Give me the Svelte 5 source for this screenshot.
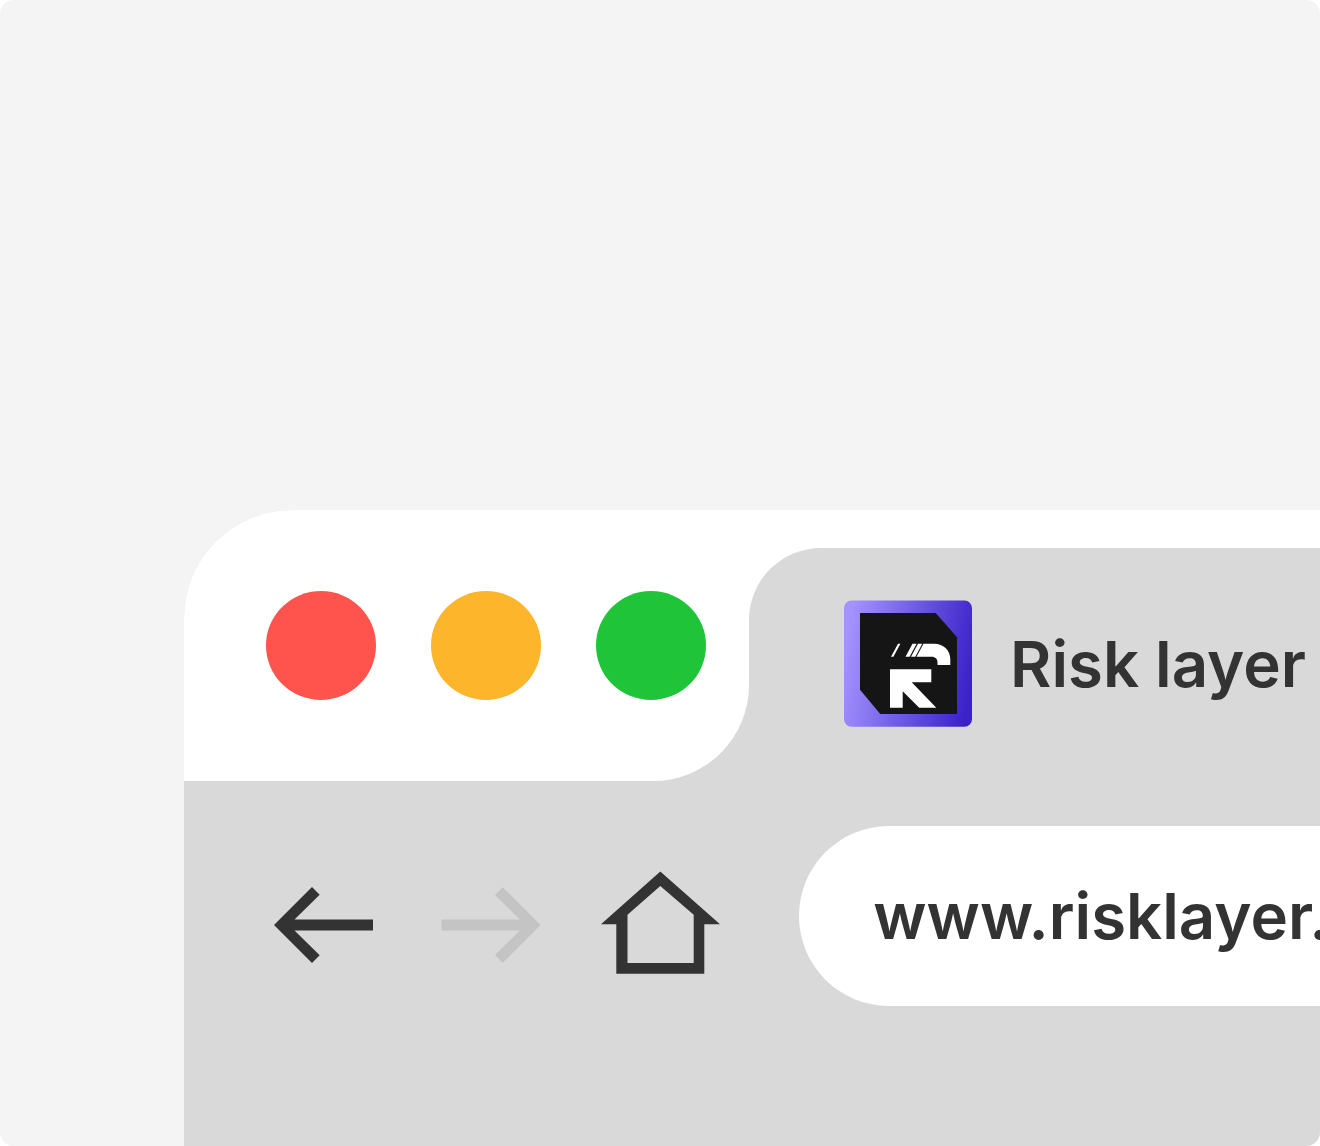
<script lang="ts">
	let { title = 'Risk layer', url = 'www.risklayer.com' } = $props();

	const lights = ['close', 'minimize', 'zoom'];
</script>

<div class="canvas">
	<div class="window">
		<div class="titlebar">
			<div class="controls">
				{#each lights as light}
					<span class="light {light}"></span>
				{/each}
			</div>
			<div class="tabs">
				<div class="tab">
					<svg class="favicon" viewBox="0 -0.5 128 127">
						<defs>
							<linearGradient id="violet" x1="0" y1="0.42" x2="1" y2="0.58">
								<stop offset="0" stop-color="#a493ff" />
								<stop offset="1" stop-color="#3a22c8" />
							</linearGradient>
						</defs>
						<rect width="128" height="126.3" rx="7.5" fill="url(#violet)" />
						<path d="M16 12.5H91.7L113 36.8V113.5H36.3L16 89.2Z" fill="#151515" />
						<g fill="#fff">
							<path d="M46 68.8H87.3V81.7H67.7L92.3 107.2H75.2L58.7 90.8V107.2H46Z" />
							<path d="M47 56.3L54 43.2H56.4L49.4 56.3Z" />
							<path d="M61.5 56.3L68.5 43.2H72.6L65.6 56.3Z" />
							<path d="M67 56.3L74 43.2H78.3L71.3 56.3Z" />
							<path d="M72.5 56.3L79.5 43.2H90C100 43.2 106.3 50 106.3 59V64.4H93.5V62C93.5 58.5 91.3 56.3 87.5 56.3Z" />
						</g>
					</svg>
					<span class="title">{title}</span>
				</div>
			</div>
		</div>

		<div class="toolbar">
			<div class="nav">
				<svg viewBox="0 0 122 104">
					<path d="M11 55L49 17L56.7 24.7L31.5 49.5H110V60.5H31.5L56.7 85.3L49 93Z" />
				</svg>
				<svg class="disabled" viewBox="0 0 122 104">
					<path d="M109.5 55L71.7 17.3L64 25L88.8 49.5H10.5V60.5H88.8L64 85L71.7 92.7Z" />
				</svg>
				<svg viewBox="0 0 122 104">
					<path
						fill-rule="evenodd"
						d="M61.3 1.5L121 54.3H105.3V103.7H17.3V54.3H2ZM61.3 16L28.5 44.7V93H94.7V44.7Z"
					/>
				</svg>
			</div>
			<div class="address">{url}</div>
		</div>
	</div>
</div>

<style>
	:global(body) {
		margin: 0;
		background: #fff;
	}

	.canvas {
		box-sizing: border-box;
		width: 1320px;
		height: 1146px;
		padding: 510px 0 0 184px;
		overflow: hidden;
		border-radius: 14px;
		background: #f4f4f4;
		color: #333;
		font-family: Inter, 'Liberation Sans', sans-serif;
		font-size: 63.5px;
		font-weight: 600;
		white-space: nowrap;
	}

	.window {
		height: 636px;
		overflow: hidden;
		border-radius: 108px 0 0 0;
		background: #d9d9d9;
	}

	.titlebar {
		display: flex;
		height: 271px;
	}

	.controls {
		box-sizing: border-box;
		flex: none;
		display: flex;
		gap: 54.5px;
		width: 565px;
		padding: 80.6px 0 0 82px;
		border-radius: 0 0 96px 0;
		background: #fff;
	}

	.light {
		width: 110.3px;
		height: 109.2px;
		border-radius: 50%;
	}

	.close {
		background: #ff544d;
	}

	.minimize {
		background: #fdb52c;
	}

	.zoom {
		background: #20c438;
	}

	/* white shows through above the tab and round its corner */
	.tabs {
		flex: 1;
		height: 110px;
		padding-top: 38px;
		background: #fff;
	}

	.tab {
		box-sizing: border-box;
		display: flex;
		align-items: center;
		gap: 38px;
		height: 233px;
		padding: 0 0 2px 95px;
		border-radius: 72px 0 0 0;
		background: #d9d9d9;
	}

	.favicon {
		flex: none;
		width: 128px;
		height: 127px;
	}

	.toolbar {
		display: flex;
		padding: 45px 0 0 79px;
	}

	.nav {
		flex: none;
		display: flex;
		gap: 46px;
		padding-top: 44px;
		margin-right: 78px;
	}

	.nav svg {
		width: 122px;
		height: 104px;
		fill: #333;
	}

	.nav .disabled {
		fill: #c4c4c4;
	}

	.address {
		flex: 1;
		height: 180px;
		padding-left: 74.3px;
		line-height: 180px;
		border-radius: 90px 0 0 90px;
		background: #fff;
	}
</style>
